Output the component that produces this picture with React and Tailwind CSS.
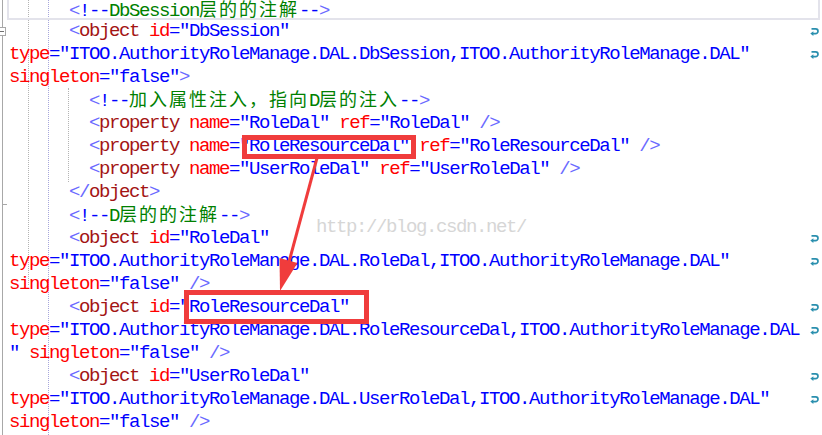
import React from 'react';

// token colours, VS XML editor style
const colors = {
  d: 'text-[#6a6aff]', // < > />
  q: 'text-[#0000ff]', // = quotes, comment dashes
  e: 'text-[#a31515]', // element names
  a: 'text-[#ff0000]', // attribute names
  v: 'text-[#0000ff]', // attribute values
  c: 'text-[#008000]', // comment text
};

const typeLine = (cls) => [
  ['a', 'type'],
  ['q', '='],
  ['v', `"ITOO.AuthorityRoleManage.DAL.${cls},ITOO.AuthorityRoleManage.DAL"`],
];

const lines = [
  { first: true, tokens: [['s', '      '], ['d', '<'], ['q', '!--'], ['c', 'DbSession'], ['cj', '层的的注解'], ['q', '--'], ['d', '>']] },
  { wrap: true, tokens: [['s', '      '], ['d', '<'], ['e', 'object'], ['s', ' '], ['a', 'id'], ['q', '='], ['v', '"DbSession"']] },
  { wrap: true, tokens: typeLine('DbSession') },
  { tokens: [['a', 'singleton'], ['q', '='], ['v', '"false"'], ['d', '>']] },
  { tokens: [['s', '        '], ['d', '<'], ['q', '!--'], ['cj', '加入属性注入，指向'], ['c', 'D'], ['cj', '层的注入'], ['q', '--'], ['d', '>']] },
  { tokens: [['s', '        '], ['d', '<'], ['e', 'property'], ['s', ' '], ['a', 'name'], ['q', '='], ['v', '"RoleDal"'], ['s', ' '], ['a', 'ref'], ['q', '='], ['v', '"RoleDal"'], ['s', ' '], ['d', '/>']] },
  { tokens: [['s', '        '], ['d', '<'], ['e', 'property'], ['s', ' '], ['a', 'name'], ['q', '='], ['v', '"RoleResourceDal"'], ['s', ' '], ['a', 'ref'], ['q', '='], ['v', '"RoleResourceDal"'], ['s', ' '], ['d', '/>']] },
  { tokens: [['s', '        '], ['d', '<'], ['e', 'property'], ['s', ' '], ['a', 'name'], ['q', '='], ['v', '"UserRoleDal"'], ['s', ' '], ['a', 'ref'], ['q', '='], ['v', '"UserRoleDal"'], ['s', ' '], ['d', '/>']] },
  { tokens: [['s', '      '], ['d', '</'], ['e', 'object'], ['d', '>']] },
  { tokens: [['s', '      '], ['d', '<'], ['q', '!--'], ['c', 'D'], ['cj', '层的的注解'], ['q', '--'], ['d', '>']] },
  { wrap: true, tokens: [['s', '      '], ['d', '<'], ['e', 'object'], ['s', ' '], ['a', 'id'], ['q', '='], ['v', '"RoleDal"']] },
  { wrap: true, tokens: typeLine('RoleDal') },
  { tokens: [['a', 'singleton'], ['q', '='], ['v', '"false"'], ['s', ' '], ['d', '/>']] },
  { wrap: true, tokens: [['s', '      '], ['d', '<'], ['e', 'object'], ['s', ' '], ['a', 'id'], ['q', '='], ['v', '"RoleResourceDal"']] },
  { wrap: true, tokens: [['a', 'type'], ['q', '='], ['v', '"ITOO.AuthorityRoleManage.DAL.RoleResourceDal,ITOO.AuthorityRoleManage.DAL']] },
  { tokens: [['v', '"'], ['s', ' '], ['a', 'singleton'], ['q', '='], ['v', '"false"'], ['s', ' '], ['d', '/>']] },
  { wrap: true, tokens: [['s', '      '], ['d', '<'], ['e', 'object'], ['s', ' '], ['a', 'id'], ['q', '='], ['v', '"UserRoleDal"']] },
  { wrap: true, tokens: typeLine('UserRoleDal') },
  { tokens: [['a', 'singleton'], ['q', '='], ['v', '"false"'], ['s', ' '], ['d', '/>']] },
];

function WrapGlyph() {
  return (
    <svg width="10" height="10" viewBox="0 0 10 10">
      <path d="M1.5 1.8 H5.6 A2.4 2.4 0 0 1 5.6 6.6 H2.8" fill="none" stroke="#2a8fae" strokeWidth="1.7" />
      <polygon points="0.3,6.6 3.4,4.3 3.4,8.9" fill="#2a8fae" />
    </svg>
  );
}

function Token({ type, text }) {
  if (type === 's') return <span>{text}</span>;
  if (type === 'cj')
    return (
      <span className="font-['Noto_Sans_CJK_SC',sans-serif] text-[18px] tracking-[2px] leading-[18px] text-[#008000]">
        {text}
      </span>
    );
  return <span className={colors[type]}>{text}</span>;
}

function CodeLine({ tokens, wrap, first }) {
  return (
    <div
      className={
        first
          ? 'h-[23px] w-[813px] border-2 border-[#e3e3eb] leading-[19px] flex'
          : 'h-[23px] leading-[23px] pl-[2px] flex'
      }
    >
      <span className="flex-1 min-w-0 whitespace-pre">
        {tokens.map(([type, text], i) => (
          <Token key={i} type={type} text={text} />
        ))}
      </span>
      {!first && (
        <span className="w-[12px] shrink-0 flex items-center">{wrap && <WrapGlyph />}</span>
      )}
    </div>
  );
}

export default function App() {
  return (
    <div className="relative w-[822px] h-[435px] overflow-hidden bg-white flex font-['Liberation_Mono',monospace] text-[19px] tracking-[-1.4px]">
      {/* gutter with outlining rail */}
      <div className="relative w-[7px] shrink-0">
        <div className="absolute left-[2px] top-0 bottom-0 w-px bg-[#a8a8a8]" />
        <div className="absolute left-[-3px] top-[27px] w-[9px] h-[9px] border border-[#a8a8a8] bg-white flex items-center justify-center">
          <div className="w-[5px] h-px bg-[#707070]" />
        </div>
        <div className="absolute left-[2px] top-[204px] w-[5px] h-px bg-[#a8a8a8]" />
      </div>

      {/* code area */}
      <div className="relative flex-1">
        <div className="absolute left-[21px] top-0 h-[285px] border-l border-dotted border-[#b4b4b4]" />
        <div className="absolute left-[41px] top-0 bottom-0 border-l border-dotted border-[#a7a7dc]" />
        <div className="absolute left-[61px] top-[88px] h-[94px] border-l border-dotted border-[#b4b4b4]" />
        <div className="relative -mt-[3px]">
          {lines.map((line, i) => (
            <CodeLine key={i} {...line} />
          ))}
        </div>
      </div>

      {/* watermark */}
      <div className="absolute left-[316px] top-[216px] leading-[23px] text-[#d6d6d6] whitespace-pre">
        http://blog.csdn.net/
      </div>

      {/* annotation boxes */}
      <div className="absolute left-[242px] top-[135px] w-[174px] h-[24px] border-[5px] border-[#f03c3c]" />
      <div className="absolute left-[184px] top-[290px] w-[185px] h-[34px] border-[5px] border-[#f03c3c]" />

      {/* annotation arrow */}
      <svg className="absolute left-0 top-0 pointer-events-none" width="822" height="435">
        <line x1="317" y1="158" x2="289" y2="262" stroke="#f03c3c" strokeWidth="3" />
        <polygon points="280,291 297.5,263 279.5,258" fill="#f03c3c" />
      </svg>
    </div>
  );
}
